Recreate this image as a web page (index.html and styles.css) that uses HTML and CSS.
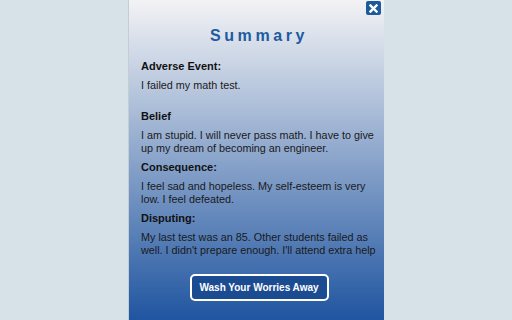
FILE: index.html
```html
<!DOCTYPE html>
<html>
<head>
<meta charset="utf-8">
<link rel="stylesheet" href="styles.css">
</head>
<body>
<div class="page">
  <div class="panel">
    <button class="close" aria-label="Close">
      <svg width="9" height="9" viewBox="0 0 9 9"><path d="M1.5 1.5 L7.5 7.5 M7.5 1.5 L1.5 7.5" stroke="#fff" stroke-width="2.4" stroke-linecap="square"/></svg>
    </button>
    <h1 class="title">Summary</h1>
    <div class="section first">
      <div class="label">Adverse Event:</div>
      <p class="text">I failed my math test.</p>
    </div>
    <div class="section">
      <div class="label">Belief</div>
      <p class="text">I am stupid. I will never pass math. I have to give up my dream of becoming an engineer.</p>
    </div>
    <div class="section">
      <div class="label">Consequence:</div>
      <p class="text">I feel sad and hopeless. My self-esteem is very low. I feel defeated.</p>
    </div>
    <div class="section">
      <div class="label">Disputing:</div>
      <p class="text">My last test was an 85. Other students failed as well. I didn't prepare enough. I'll attend extra help</p>
    </div>
    <div class="actions">
      <button class="wash">Wash Your Worries Away</button>
    </div>
  </div>
</div>
</body>
</html>
```
FILE: styles.css
```css
html, body {
  margin: 0;
  padding: 0;
  height: 100%;
}
body {
  background: #d6e1e8;
  font-family: "Liberation Sans", Arial, sans-serif;
  overflow: hidden;
}
.page {
  display: flex;
  justify-content: center;
  height: 320px;
}
.panel {
  position: relative;
  width: 256px;
  height: 320px;
  box-sizing: border-box;
  padding: 25px 5px 0 12px;
  background: linear-gradient(to bottom, #f3f3f5 0%, #2055a0 100%);
  border-left: 1px solid #c4ccd4;
  display: flex;
  flex-direction: column;
}
.close {
  position: absolute;
  top: 1px;
  right: 3px;
  width: 15px;
  height: 14px;
  padding: 0;
  border: none;
  border-radius: 2px;
  background: #1d5a9c;
  display: flex;
  align-items: center;
  justify-content: center;
}
.title {
  margin: 0 6px 13px 0;
  text-align: center;
  font-size: 16px;
  line-height: 22px;
  font-weight: bold;
  letter-spacing: 3.6px;
  color: #1d5ba0;
  padding-left: 4px;
}
.section {
  margin-bottom: 6px;
}
.section.first {
  margin-bottom: 18px;
}
.label {
  font-size: 11px;
  line-height: 13px;
  font-weight: bold;
  color: #111;
  margin-bottom: 6px;
}
.text {
  margin: 0;
  font-size: 10.8px;
  line-height: 13px;
  color: #1a1a1a;
}
.actions {
  display: flex;
  justify-content: center;
  margin-top: 11px;
  margin-right: 2px;
}
.wash {
  width: 139px;
  height: 27px;
  box-sizing: border-box;
  border: 2px solid #fff;
  border-radius: 5px;
  background: #1b4b90;
  color: #fff;
  font-family: "Liberation Sans", Arial, sans-serif;
  font-weight: bold;
  font-size: 10px;
  padding: 0;
}
```
